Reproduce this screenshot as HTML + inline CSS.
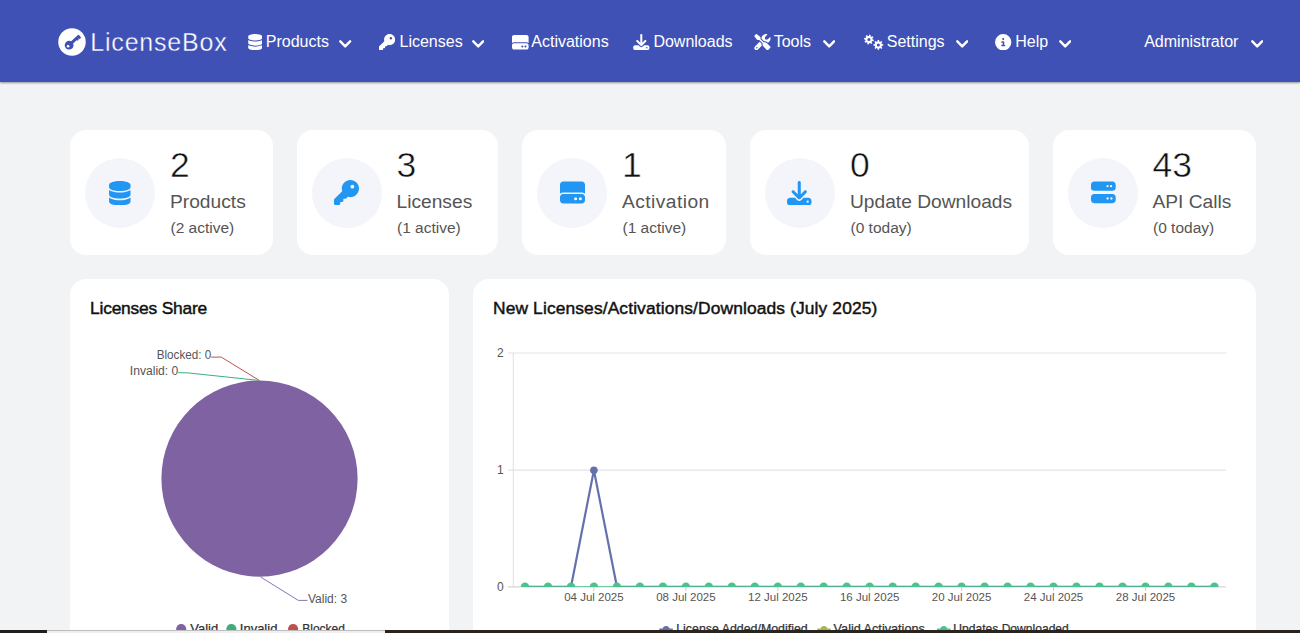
<!DOCTYPE html>
<html><head><meta charset="utf-8">
<style>
*{margin:0;padding:0;box-sizing:border-box}
html,body{width:1300px;height:633px;overflow:hidden;background:#f2f3f5;font-family:"Liberation Sans",sans-serif}
.a{position:absolute;white-space:nowrap}
#nav{position:absolute;left:0;top:0;width:1300px;height:82px;background:#3f51b5;box-shadow:0 1px 2px rgba(0,0,0,.4)}
.nt{position:absolute;color:#fff;font-size:16px;line-height:16px;top:33.5px;white-space:nowrap}
.card{position:absolute;background:#fff;border-radius:16px;top:129.5px;height:125.5px}
.ic{position:absolute;left:15px;top:28px;width:70px;height:70px;border-radius:50%;background:#f3f5fa}
.num{position:absolute;left:100px;top:18.5px;font-size:35.5px;line-height:35.5px;color:#111;-webkit-text-stroke:0.5px #fff;white-space:nowrap}
.lbl{position:absolute;left:100px;top:62.5px;font-size:19.2px;line-height:19.2px;color:#555;white-space:nowrap}
.sub{position:absolute;left:100.5px;top:90.5px;font-size:15.5px;line-height:15.5px;color:#555;white-space:nowrap}
.box{position:absolute;background:#fff;border-radius:16px;top:279px;height:400px}
.ttl{position:absolute;font-size:17.4px;line-height:17.4px;color:#111;-webkit-text-stroke:0.45px #111;white-space:nowrap}
</style></head><body>
<div id="nav">
<svg class="a" style="left:57.5px;top:28px" width="28" height="28" viewBox="0 0 28 28">
<circle cx="14" cy="13.95" r="13.75" fill="#fff"/>
<g transform="translate(11.1,17.2) rotate(-42.4)" fill="#3f51b5">
<circle cx="0" cy="0" r="4.4"/>
<rect x="1" y="-1.5" width="13.2" height="3" rx="0.9"/>
<rect x="9.2" y="0" width="1.8" height="2.5"/>
<rect x="11.7" y="0" width="2.3" height="2.6" rx="0.4"/>
</g>
<circle cx="10.1" cy="18.2" r="1.3" fill="#fff"/>
</svg>
<div class="a" style="left:90.3px;top:29.5px;font-size:25px;line-height:25px;color:#fff;letter-spacing:0.8px;-webkit-text-stroke:0.35px #3f51b5">LicenseBox</div>
<svg class="a" style="left:247.6px;top:34.0px" width="14.6" height="16.2" viewBox="0 0 448 512" preserveAspectRatio="xMidYMid meet"><path fill="#fff" fill-rule="evenodd" d="M448 80v48c0 44.2-100.3 80-224 80S0 172.2 0 128V80C0 35.8 100.3 0 224 0S448 35.8 448 80zM393.2 214.7c20.8-7.4 39.9-16.9 54.8-28.6V288c0 44.2-100.3 80-224 80S0 332.2 0 288V186.1c14.9 11.8 34 21.2 54.8 28.6C99.7 230.7 159.5 240 224 240s124.3-9.3 169.2-25.3zM0 346.1c14.9 11.8 34 21.2 54.8 28.6C99.7 390.7 159.5 400 224 400s124.3-9.3 169.2-25.3c20.8-7.4 39.9-16.9 54.8-28.6V432c0 44.2-100.3 80-224 80S0 476.2 0 432V346.1z"/></svg>
<div class="nt" style="left:265.8px">Products</div>
<svg class="a" style="left:339.3px;top:39.9px" width="12.4" height="8.4" viewBox="0 0 12.4 8.4"><polyline points="1.3,1.3 6.2,6.4 11.1,1.3" fill="none" stroke="#fff" stroke-width="2.4" stroke-linecap="round" stroke-linejoin="round"/></svg>
<svg class="a" style="left:379.2px;top:34.0px" width="16.2" height="16.2" viewBox="0 0 512 512" preserveAspectRatio="xMidYMid meet"><path fill="#fff" fill-rule="evenodd" d="M336 352c97.2 0 176-78.8 176-176S433.2 0 336 0S160 78.8 160 176c0 18.7 2.9 36.8 8.3 53.7L7 391c-4.5 4.5-7 10.6-7 17v80c0 13.3 10.7 24 24 24h80c13.3 0 24-10.7 24-24V448h40c13.3 0 24-10.7 24-24V384h40c6.4 0 12.5-2.5 17-7l33.3-33.3c16.9 5.4 35 8.3 53.7 8.3zM376 96a40 40 0 1 1 0 80 40 40 0 1 1 0-80z"/></svg>
<div class="nt" style="left:399.5px">Licenses</div>
<svg class="a" style="left:472.0px;top:39.9px" width="12.4" height="8.4" viewBox="0 0 12.4 8.4"><polyline points="1.3,1.3 6.2,6.4 11.1,1.3" fill="none" stroke="#fff" stroke-width="2.4" stroke-linecap="round" stroke-linejoin="round"/></svg>
<svg class="a" style="left:512.2px;top:34.0px" width="16.6" height="16.6" viewBox="0 0 512 512" preserveAspectRatio="xMidYMid meet"><path fill="#fff" fill-rule="evenodd" d="M0 96C0 60.7 28.7 32 64 32H448c35.3 0 64 28.7 64 64V280.4c-17-15.2-39.4-24.4-64-24.4H64c-24.6 0-47 9.2-64 24.4V96zM64 288H448c35.3 0 64 28.7 64 64v64c0 35.3-28.7 64-64 64H64c-35.3 0-64-28.7-64-64V352c0-35.3 28.7-64 64-64zM320 416a32 32 0 1 0 0-64 32 32 0 1 0 0 64zm128-32a32 32 0 1 0 -64 0 32 32 0 1 0 64 0z"/></svg>
<div class="nt" style="left:531.3px">Activations</div>
<svg class="a" style="left:633.2px;top:33.8px" width="16.6" height="16.2" viewBox="0 0 512 512" preserveAspectRatio="xMidYMid meet"><path fill="#fff" fill-rule="evenodd" d="M288 32c0-17.7-14.3-32-32-32s-32 14.3-32 32V274.7l-73.4-73.4c-12.5-12.5-32.8-12.5-45.3 0s-12.5 32.8 0 45.3l128 128c12.5 12.5 32.8 12.5 45.3 0l128-128c12.5-12.5 12.5-32.8 0-45.3s-32.8-12.5-45.3 0L288 274.7V32zM64 352c-35.3 0-64 28.7-64 64v32c0 35.3 28.7 64 64 64H448c35.3 0 64-28.7 64-64V416c0-35.3-28.7-64-64-64H346.5l-45.3 45.3c-25 25-65.5 25-90.5 0L165.5 352H64zm368 56a24 24 0 1 1 0 48 24 24 0 1 1 0-48z"/></svg>
<div class="nt" style="left:653.4px">Downloads</div>
<svg class="a" style="left:754.2px;top:33.8px" width="16.9" height="16.2" viewBox="0 0 512 512" preserveAspectRatio="xMidYMid meet"><path fill="#fff" fill-rule="evenodd" d="M78.6 5C69.1-2.4 55.6-1.5 47 7L7 47c-8.5 8.5-9.4 22-2.1 31.6l80 104c4.5 5.9 11.6 9.4 19 9.4h54.1l109 109c-14.7 29-10 65.4 14.3 89.6l112 112c12.5 12.5 32.8 12.5 45.3 0l64-64c12.5-12.5 12.5-32.8 0-45.3l-112-112c-24.2-24.2-60.6-29-89.6-14.3l-109-109V104c0-7.5-3.5-14.5-9.4-19L78.6 5zM19.9 396.1C7.2 408.8 0 426.1 0 444.1C0 481.6 30.4 512 67.9 512c18 0 35.3-7.2 48-19.9L233.7 374.3c-7.8-20.9-9-43.6-3.6-65.1l-61.7-61.7L19.9 396.1zM512 144c0-10.5-1.1-20.7-3.2-30.5c-2.4-11.2-16.1-14.1-24.2-6l-63.9 63.9c-3 3-7.1 4.7-11.3 4.7H352c-8.8 0-16-7.2-16-16V102.6c0-4.200 1.7-8.3 4.7-11.3l63.9-63.9c8.1-8.1 5.2-21.8-6-24.2C388.7 1.1 378.5 0 368 0C288.5 0 224 64.5 224 144l0 .8 85.3 85.3c36-9.1 75.8 .5 104 28.7L429 274.5c49-23 83-72.8 83-130.5zM56 432a24 24 0 1 1 48 0 24 24 0 1 1 -48 0z"/></svg>
<div class="nt" style="left:773.7px">Tools</div>
<svg class="a" style="left:823.0px;top:39.9px" width="12.4" height="8.4" viewBox="0 0 12.4 8.4"><polyline points="1.3,1.3 6.2,6.4 11.1,1.3" fill="none" stroke="#fff" stroke-width="2.4" stroke-linecap="round" stroke-linejoin="round"/></svg>
<svg class="a" style="left:863.8px;top:34.0px" width="19.8" height="16" viewBox="0 0 640 512" preserveAspectRatio="xMidYMid meet"><path fill="#fff" fill-rule="evenodd" d="M319.9 182.9 L309.9 231.9 L267.0 225.8 L246.4 256.4 L268.2 293.9 L226.5 321.5 L200.4 286.9 L164.2 293.9 L153.1 335.9 L104.1 325.9 L110.2 283.0 L79.6 262.4 L42.1 284.2 L14.5 242.5 L49.1 216.4 L42.1 180.2 L0.1 169.1 L10.1 120.1 L53.0 126.2 L73.6 95.6 L51.8 58.1 L93.5 30.5 L119.6 65.1 L155.8 58.1 L166.9 16.1 L215.9 26.1 L209.8 69.0 L240.4 89.6 L277.9 67.8 L305.5 109.5 L270.9 135.6 L277.9 171.8ZM110.0 176.0a50 50 0 1 0 100 0a50 50 0 1 0 -100 0zM622.0 327.0 L622.0 377.0 L578.7 379.5 L564.6 413.7 L593.4 446.0 L558.0 481.4 L525.7 452.6 L491.5 466.7 L489.0 510.0 L439.0 510.0 L436.5 466.7 L402.3 452.6 L370.0 481.4 L334.6 446.0 L363.4 413.7 L349.3 379.5 L306.0 377.0 L306.0 327.0 L349.3 324.5 L363.4 290.3 L334.6 258.0 L370.0 222.6 L402.3 251.4 L436.5 237.3 L439.0 194.0 L489.0 194.0 L491.5 237.3 L525.7 251.4 L558.0 222.6 L593.4 258.0 L564.6 290.3 L578.7 324.5ZM414.0 352.0a50 50 0 1 0 100 0a50 50 0 1 0 -100 0z"/></svg>
<div class="nt" style="left:886.8px">Settings</div>
<svg class="a" style="left:955.6px;top:39.9px" width="12.4" height="8.4" viewBox="0 0 12.4 8.4"><polyline points="1.3,1.3 6.2,6.4 11.1,1.3" fill="none" stroke="#fff" stroke-width="2.4" stroke-linecap="round" stroke-linejoin="round"/></svg>
<svg class="a" style="left:995.4px;top:33.8px" width="16.4" height="16.4" viewBox="0 0 512 512" preserveAspectRatio="xMidYMid meet"><path fill="#fff" fill-rule="evenodd" d="M256 512A256 256 0 1 0 256 0a256 256 0 1 0 0 512zM216 336h24V272H216c-13.3 0-24-10.7-24-24s10.7-24 24-24h48c13.3 0 24 10.7 24 24v88h8c13.3 0 24 10.7 24 24s-10.7 24-24 24H216c-13.3 0-24-10.7-24-24s10.7-24 24-24zm40-208a32 32 0 1 1 0 64 32 32 0 1 1 0-64z"/></svg>
<div class="nt" style="left:1015.2px">Help</div>
<svg class="a" style="left:1058.6px;top:39.9px" width="12.4" height="8.4" viewBox="0 0 12.4 8.4"><polyline points="1.3,1.3 6.2,6.4 11.1,1.3" fill="none" stroke="#fff" stroke-width="2.4" stroke-linecap="round" stroke-linejoin="round"/></svg>
<div class="nt" style="left:1144.2px">Administrator</div>
<svg class="a" style="left:1250.8px;top:39.9px" width="12.4" height="8.4" viewBox="0 0 12.4 8.4"><polyline points="1.3,1.3 6.2,6.4 11.1,1.3" fill="none" stroke="#fff" stroke-width="2.4" stroke-linecap="round" stroke-linejoin="round"/></svg>
</div>
<div class="card" style="left:70px;width:202.5px"><div class="ic"></div><div class="num">2</div><div class="lbl">Products</div><div class="sub">(2 active)</div></div>
<svg class="a" style="left:109.1px;top:180.5px" width="21.6" height="24.5" viewBox="0 0 448 512" preserveAspectRatio="xMidYMid meet"><path fill="#2196f3" fill-rule="evenodd" d="M448 80v48c0 44.2-100.3 80-224 80S0 172.2 0 128V80C0 35.8 100.3 0 224 0S448 35.8 448 80zM393.2 214.7c20.8-7.4 39.9-16.9 54.8-28.6V288c0 44.2-100.3 80-224 80S0 332.2 0 288V186.1c14.9 11.8 34 21.2 54.8 28.6C99.7 230.7 159.5 240 224 240s124.3-9.3 169.2-25.3zM0 346.1c14.9 11.8 34 21.2 54.8 28.6C99.7 390.7 159.5 400 224 400s124.3-9.3 169.2-25.3c20.8-7.4 39.9-16.9 54.8-28.6V432c0 44.2-100.3 80-224 80S0 476.2 0 432V346.1z"/></svg>
<div class="card" style="left:296.5px;width:201.5px"><div class="ic"></div><div class="num">3</div><div class="lbl">Licenses</div><div class="sub">(1 active)</div></div>
<svg class="a" style="left:333.9px;top:180.3px" width="25" height="25" viewBox="0 0 512 512" preserveAspectRatio="xMidYMid meet"><path fill="#2196f3" fill-rule="evenodd" d="M336 352c97.2 0 176-78.8 176-176S433.2 0 336 0S160 78.8 160 176c0 18.7 2.9 36.8 8.3 53.7L7 391c-4.5 4.5-7 10.6-7 17v80c0 13.3 10.7 24 24 24h80c13.3 0 24-10.7 24-24V448h40c13.3 0 24-10.7 24-24V384h40c6.4 0 12.5-2.5 17-7l33.3-33.3c16.9 5.4 35 8.3 53.7 8.3zM376 96a40 40 0 1 1 0 80 40 40 0 1 1 0-80z"/></svg>
<div class="card" style="left:522px;width:204px"><div class="ic"></div><div class="num">1</div><div class="lbl" style="letter-spacing:0.45px">Activation</div><div class="sub">(1 active)</div></div>
<svg class="a" style="left:559.9px;top:180.1px" width="25" height="25" viewBox="0 0 512 512" preserveAspectRatio="xMidYMid meet"><path fill="#2196f3" fill-rule="evenodd" d="M0 96C0 60.7 28.7 32 64 32H448c35.3 0 64 28.7 64 64V280.4c-17-15.2-39.4-24.4-64-24.4H64c-24.6 0-47 9.2-64 24.4V96zM64 288H448c35.3 0 64 28.7 64 64v64c0 35.3-28.7 64-64 64H64c-35.3 0-64-28.7-64-64V352c0-35.3 28.7-64 64-64zM320 416a32 32 0 1 0 0-64 32 32 0 1 0 0 64zm128-32a32 32 0 1 0 -64 0 32 32 0 1 0 64 0z"/></svg>
<div class="card" style="left:750px;width:279px"><div class="ic"></div><div class="num">0</div><div class="lbl">Update Downloads</div><div class="sub">(0 today)</div></div>
<svg class="a" style="left:787.2px;top:180.5px" width="24.5" height="24.5" viewBox="0 0 512 512" preserveAspectRatio="xMidYMid meet"><path fill="#2196f3" fill-rule="evenodd" d="M288 32c0-17.7-14.3-32-32-32s-32 14.3-32 32V274.7l-73.4-73.4c-12.5-12.5-32.8-12.5-45.3 0s-12.5 32.8 0 45.3l128 128c12.5 12.5 32.8 12.5 45.3 0l128-128c12.5-12.5 12.5-32.8 0-45.3s-32.8-12.5-45.3 0L288 274.7V32zM64 352c-35.3 0-64 28.7-64 64v32c0 35.3 28.7 64 64 64H448c35.3 0 64-28.7 64-64V416c0-35.3-28.7-64-64-64H346.5l-45.3 45.3c-25 25-65.5 25-90.5 0L165.5 352H64zm368 56a24 24 0 1 1 0 48 24 24 0 1 1 0-48z"/></svg>
<div class="card" style="left:1052.5px;width:203.5px"><div class="ic"></div><div class="num">43</div><div class="lbl">API Calls</div><div class="sub">(0 today)</div></div>
<svg class="a" style="left:1091px;top:180.4px" width="24.7" height="24.7" viewBox="0 0 512 512" preserveAspectRatio="xMidYMid meet"><path fill="#2196f3" fill-rule="evenodd" d="M64 32C28.7 32 0 60.7 0 96v64c0 35.3 28.7 64 64 64H448c35.3 0 64-28.7 64-64V96c0-35.3-28.7-64-64-64H64zm280 72a24 24 0 1 1 0 48 24 24 0 1 1 0-48zm48 24a24 24 0 1 1 48 0 24 24 0 1 1 -48 0zM64 288c-35.3 0-64 28.7-64 64v64c0 35.3 28.7 64 64 64H448c35.3 0 64-28.7 64-64V352c0-35.3-28.7-64-64-64H64zm280 72a24 24 0 1 1 0 48 24 24 0 1 1 0-48zm56 24a24 24 0 1 1 48 0 24 24 0 1 1 -48 0z"/></svg>
<div class="box" style="left:70px;width:379px"></div>
<div class="box" style="left:473px;width:783px"></div>
<div class="ttl" style="left:90px;top:300px;letter-spacing:-0.2px">Licenses Share</div>
<div class="ttl" style="left:493px;top:300px;letter-spacing:0.12px">New Licenses/Activations/Downloads (July 2025)</div>
<svg class="a" style="left:0;top:0" width="1300" height="633" viewBox="0 0 1300 633">
<defs><clipPath id="pc"><rect x="508" y="300" width="720" height="287"/></clipPath></defs>
<circle cx="259.5" cy="478.6" r="98.1" fill="#7e62a1"/>
<polyline points="211.2,357.1 221.3,357.1 259.6,380.6" fill="none" stroke="#c0504d" stroke-width="1"/>
<polyline points="178.3,372.7 188,372.9 258.5,380.4" fill="none" stroke="#3dae7a" stroke-width="1"/>
<polyline points="260.6,577 298.3,600.4 307.4,600.4" fill="none" stroke="#8b73b8" stroke-width="1"/>
<text x="211.2" y="359" text-anchor="end" textLength="54.5" lengthAdjust="spacingAndGlyphs" font-family="Liberation Sans" font-size="12" fill="#555">Blocked: 0</text>
<text x="178.3" y="375.2" text-anchor="end" textLength="48.5" lengthAdjust="spacingAndGlyphs" font-family="Liberation Sans" font-size="12" fill="#555">Invalid: 0</text>
<text x="308" y="603" font-family="Liberation Sans" font-size="12" fill="#555">Valid: 3</text>
<circle cx="181.2" cy="629" r="5.1" fill="#7e62a1"/>
<circle cx="231.4" cy="629" r="5.1" fill="#3dae7a"/>
<circle cx="293.1" cy="629" r="5.1" fill="#c0504d"/>
<text x="190.3" y="632.6" font-family="Liberation Sans" font-size="13" fill="#333" stroke="#333" stroke-width="0.25">Valid</text>
<text x="239.8" y="632.6" font-family="Liberation Sans" font-size="13" fill="#333" stroke="#333" stroke-width="0.25">Invalid</text>
<text x="302.3" y="632.6" textLength="42.6" lengthAdjust="spacingAndGlyphs" font-family="Liberation Sans" font-size="13" fill="#333" stroke="#333" stroke-width="0.25">Blocked</text>
<line x1="508" y1="353" x2="1226" y2="353" stroke="#e3e3e3" stroke-width="1.2"/>
<line x1="508" y1="470.2" x2="1226" y2="470.2" stroke="#e3e3e3" stroke-width="1.2"/>
<line x1="513.3" y1="353" x2="513.3" y2="587" stroke="#e0e0e0" stroke-width="1"/>
<line x1="508" y1="586.8" x2="1226" y2="586.8" stroke="#d6d6d6" stroke-width="1.2"/>
<text x="503.8" y="357.3" font-family="Liberation Sans" font-size="12" fill="#555" text-anchor="end">2</text>
<text x="503.8" y="474.4" font-family="Liberation Sans" font-size="12" fill="#555" text-anchor="end">1</text>
<text x="503.8" y="591" font-family="Liberation Sans" font-size="12" fill="#555" text-anchor="end">0</text>
<line x1="593.9" y1="587" x2="593.9" y2="591" stroke="#ccc" stroke-width="1"/>
<text x="593.9" y="600.7" font-family="Liberation Sans" font-size="11.5" fill="#555" text-anchor="middle">04 Jul 2025</text>
<line x1="685.9" y1="587" x2="685.9" y2="591" stroke="#ccc" stroke-width="1"/>
<text x="685.9" y="600.7" font-family="Liberation Sans" font-size="11.5" fill="#555" text-anchor="middle">08 Jul 2025</text>
<line x1="777.8" y1="587" x2="777.8" y2="591" stroke="#ccc" stroke-width="1"/>
<text x="777.8" y="600.7" font-family="Liberation Sans" font-size="11.5" fill="#555" text-anchor="middle">12 Jul 2025</text>
<line x1="869.7" y1="587" x2="869.7" y2="591" stroke="#ccc" stroke-width="1"/>
<text x="869.7" y="600.7" font-family="Liberation Sans" font-size="11.5" fill="#555" text-anchor="middle">16 Jul 2025</text>
<line x1="961.6" y1="587" x2="961.6" y2="591" stroke="#ccc" stroke-width="1"/>
<text x="961.6" y="600.7" font-family="Liberation Sans" font-size="11.5" fill="#555" text-anchor="middle">20 Jul 2025</text>
<line x1="1053.5" y1="587" x2="1053.5" y2="591" stroke="#ccc" stroke-width="1"/>
<text x="1053.5" y="600.7" font-family="Liberation Sans" font-size="11.5" fill="#555" text-anchor="middle">24 Jul 2025</text>
<line x1="1145.5" y1="587" x2="1145.5" y2="591" stroke="#ccc" stroke-width="1"/>
<text x="1145.5" y="600.7" font-family="Liberation Sans" font-size="11.5" fill="#555" text-anchor="middle">28 Jul 2025</text>
<g clip-path="url(#pc)">
<polyline points="525.0,586.8 548.0,586.8 571.0,586.8 593.9,470.2 616.9,586.8 639.9,586.8 662.9,586.8 685.9,586.8 708.8,586.8 731.8,586.8 754.8,586.8 777.8,586.8 800.8,586.8 823.7,586.8 846.7,586.8 869.7,586.8 892.7,586.8 915.7,586.8 938.6,586.8 961.6,586.8 984.6,586.8 1007.6,586.8 1030.6,586.8 1053.5,586.8 1076.5,586.8 1099.5,586.8 1122.5,586.8 1145.5,586.8 1168.4,586.8 1191.4,586.8 1214.4,586.8" fill="none" stroke="#6571ad" stroke-width="2.2" stroke-linejoin="round"/>
<line x1="525.0" y1="586.8" x2="1214.4" y2="586.8" stroke="#4cc38f" stroke-width="1.2"/>
<circle cx="525.0" cy="586.8" r="4.2" fill="#4cc38f"/>
<circle cx="548.0" cy="586.8" r="4.2" fill="#4cc38f"/>
<circle cx="571.0" cy="586.8" r="4.2" fill="#4cc38f"/>
<circle cx="593.9" cy="586.8" r="4.2" fill="#4cc38f"/>
<circle cx="616.9" cy="586.8" r="4.2" fill="#4cc38f"/>
<circle cx="639.9" cy="586.8" r="4.2" fill="#4cc38f"/>
<circle cx="662.9" cy="586.8" r="4.2" fill="#4cc38f"/>
<circle cx="685.9" cy="586.8" r="4.2" fill="#4cc38f"/>
<circle cx="708.8" cy="586.8" r="4.2" fill="#4cc38f"/>
<circle cx="731.8" cy="586.8" r="4.2" fill="#4cc38f"/>
<circle cx="754.8" cy="586.8" r="4.2" fill="#4cc38f"/>
<circle cx="777.8" cy="586.8" r="4.2" fill="#4cc38f"/>
<circle cx="800.8" cy="586.8" r="4.2" fill="#4cc38f"/>
<circle cx="823.7" cy="586.8" r="4.2" fill="#4cc38f"/>
<circle cx="846.7" cy="586.8" r="4.2" fill="#4cc38f"/>
<circle cx="869.7" cy="586.8" r="4.2" fill="#4cc38f"/>
<circle cx="892.7" cy="586.8" r="4.2" fill="#4cc38f"/>
<circle cx="915.7" cy="586.8" r="4.2" fill="#4cc38f"/>
<circle cx="938.6" cy="586.8" r="4.2" fill="#4cc38f"/>
<circle cx="961.6" cy="586.8" r="4.2" fill="#4cc38f"/>
<circle cx="984.6" cy="586.8" r="4.2" fill="#4cc38f"/>
<circle cx="1007.6" cy="586.8" r="4.2" fill="#4cc38f"/>
<circle cx="1030.6" cy="586.8" r="4.2" fill="#4cc38f"/>
<circle cx="1053.5" cy="586.8" r="4.2" fill="#4cc38f"/>
<circle cx="1076.5" cy="586.8" r="4.2" fill="#4cc38f"/>
<circle cx="1099.5" cy="586.8" r="4.2" fill="#4cc38f"/>
<circle cx="1122.5" cy="586.8" r="4.2" fill="#4cc38f"/>
<circle cx="1145.5" cy="586.8" r="4.2" fill="#4cc38f"/>
<circle cx="1168.4" cy="586.8" r="4.2" fill="#4cc38f"/>
<circle cx="1191.4" cy="586.8" r="4.2" fill="#4cc38f"/>
<circle cx="1214.4" cy="586.8" r="4.2" fill="#4cc38f"/>
</g>
<circle cx="593.9" cy="470.2" r="3.8" fill="#6571ad"/>
<g>
<line x1="659.3" y1="629.5" x2="672.8" y2="629.5" stroke="#6571ad" stroke-width="2"/><circle cx="666.05" cy="629.5" r="3.5" fill="#6571ad"/>
<line x1="817.2" y1="629.5" x2="830.7" y2="629.5" stroke="#a5b556" stroke-width="2"/><circle cx="823.95" cy="629.5" r="3.5" fill="#a5b556"/>
<line x1="937" y1="629.5" x2="950.5" y2="629.5" stroke="#4cc38f" stroke-width="2"/><circle cx="943.75" cy="629.5" r="3.5" fill="#4cc38f"/>
<text x="676.2" y="632.6" textLength="131.5" lengthAdjust="spacingAndGlyphs" font-family="Liberation Sans" font-size="13" fill="#333" stroke="#333" stroke-width="0.25">License Added/Modified</text>
<text x="833.6" y="632.6" textLength="91.2" lengthAdjust="spacingAndGlyphs" font-family="Liberation Sans" font-size="13" fill="#333" stroke="#333" stroke-width="0.25">Valid Activations</text>
<text x="953.3" y="632.6" textLength="115.5" lengthAdjust="spacingAndGlyphs" font-family="Liberation Sans" font-size="13" fill="#333" stroke="#333" stroke-width="0.25">Updates Downloaded</text>
</g>
</svg>
<div class="a" style="left:0;top:630px;width:47px;height:3px;background:#1f1f1f"></div>
<div class="a" style="left:47px;top:630px;width:338px;height:3px;background:#efefef;border-top:1px solid #bdbdbd"></div>
<div class="a" style="left:385px;top:630px;width:915px;height:3px;background:#2a2421"></div>
</body></html>
